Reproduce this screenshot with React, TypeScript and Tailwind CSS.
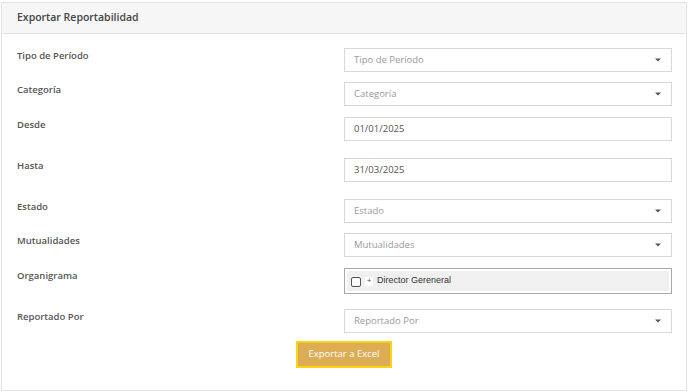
const font = { fontFamily: '"Open Sans", "Noto Sans", sans-serif' };

function Caret() {
  return (
    <svg width="6" height="4" viewBox="0 0 6 4" className="mr-[2px] shrink-0">
      <path d="M0 0.5h6L3 3.5z" fill="#555" />
    </svg>
  );
}

function Select({ placeholder }: { placeholder: string }) {
  return (
    <div className="flex h-[24px] w-[328px] items-center justify-between border border-[#d8d8d8] bg-white pl-[9px] pr-[8px] text-[9.5px] text-[#999]">
      <span>{placeholder}</span>
      <Caret />
    </div>
  );
}

function Input({ value }: { value: string }) {
  return (
    <div className="flex h-[24px] w-[328px] items-center border border-[#d8d8d8] bg-white pl-[9px] text-[9.5px] text-[#555]">
      {value}
    </div>
  );
}

function Row({ label, children, className }: { label: string; children: React.ReactNode; className?: string }) {
  return (
    <div className={`flex items-start ${className ?? ''}`}>
      <label className="w-[327px] pt-[1px] text-[9.5px] font-semibold leading-[14px] text-[#555]">{label}</label>
      {children}
    </div>
  );
}

export default function App() {
  return (
    <div className="h-[392px] w-[688px] bg-white pl-[1px] pt-[2px]" style={font}>
      <div className="h-[389px] w-[686px] border border-[#e3e3e3] bg-white">
        <div className="flex h-[31px] items-center border-b border-[#e3e3e3] bg-[#f6f6f6] pl-[15px] text-[10.5px] font-semibold text-[#444]">
          Exportar Reportabilidad
        </div>
        <div className="pl-[15px] pt-[14px]">
          <Row label="Tipo de Período">
            <Select placeholder="Tipo de Período" />
          </Row>
          <Row label="Categoría" className="mt-[10px]">
            <Select placeholder="Categoría" />
          </Row>
          <Row label="Desde" className="mt-[11px]">
            <Input value="01/01/2025" />
          </Row>
          <Row label="Hasta" className="mt-[17px]">
            <Input value="31/03/2025" />
          </Row>
          <Row label="Estado" className="mt-[17px]">
            <Select placeholder="Estado" />
          </Row>
          <Row label="Mutualidades" className="mt-[10px]">
            <Select placeholder="Mutualidades" />
          </Row>
          <Row label="Organigrama" className="mt-[11px]">
            <div className="h-[26px] w-[328px] border border-[#a9a9a9] bg-white p-[2px]">
              <div
                className="flex h-[20px] items-center bg-[#f0f0f0] pl-[4px] text-[9px] text-[#333]"
                style={{ fontFamily: '"Liberation Sans", Arial, sans-serif' }}
              >
                <span className="mt-[2px] inline-block h-[10px] w-[10px] rounded-[2px] border border-[#555] bg-white" />
                <span className="ml-[4px] flex h-[9px] w-[8px] items-center justify-center bg-white text-[8px] leading-none text-[#555]">
                  +
                </span>
                <span className="ml-[4px]">Director Gereneral</span>
              </div>
            </div>
          </Row>
          <Row label="Reportado Por" className="mt-[15px]">
            <Select placeholder="Reportado Por" />
          </Row>
          <div className="mt-[8px] flex pl-[279px]">
            <button className="h-[27px] w-[96px] border-2 border-[#fcd116] bg-[#dcad55] text-[9.5px] text-white">
              Exportar a Excel
            </button>
          </div>
        </div>
      </div>
    </div>
  );
}
